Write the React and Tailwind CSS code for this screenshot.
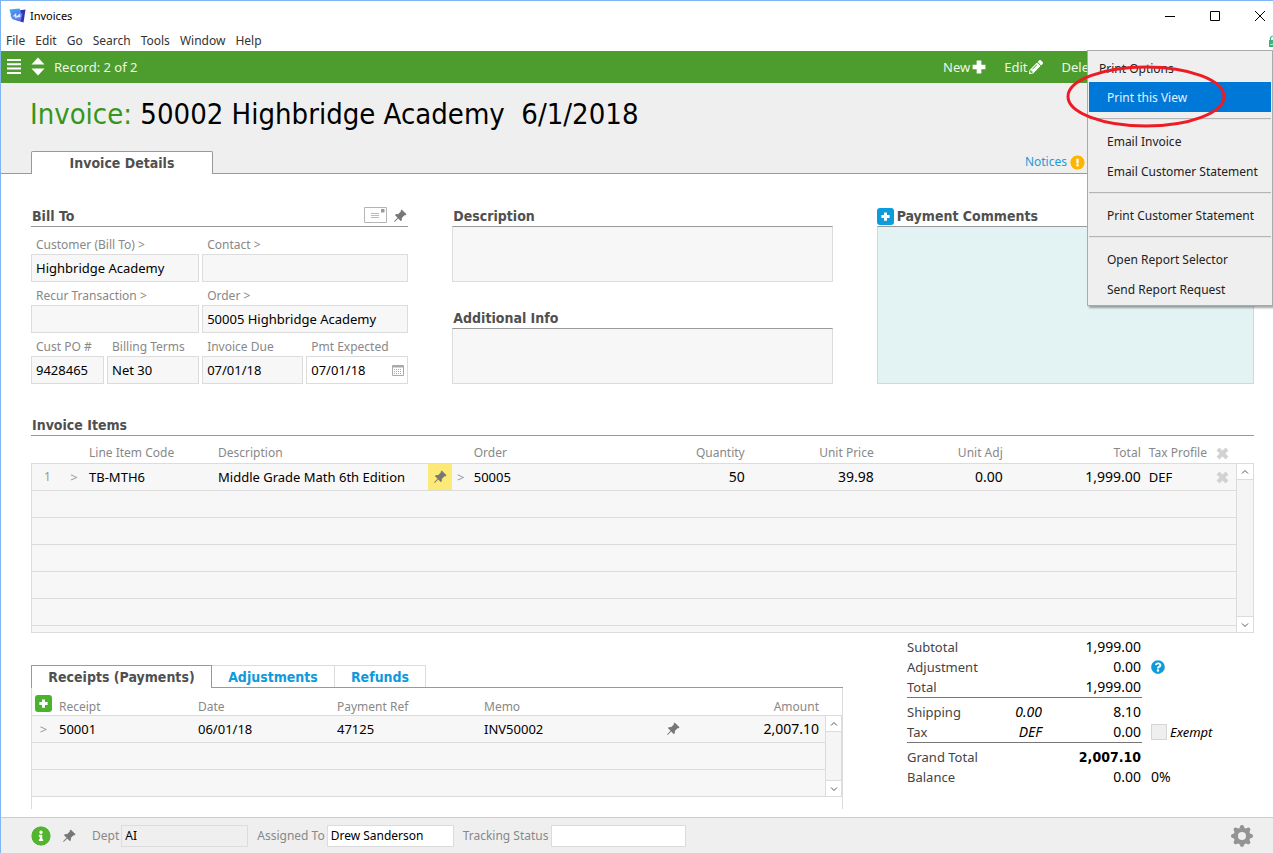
import { BsPinAngleFill, BsGearFill } from "react-icons/bs"
import { FaPencilAlt, FaInfoCircle, FaExclamationCircle, FaQuestionCircle } from "react-icons/fa"

const MENUS = ["File", "Edit", "Go", "Search", "Tools", "Window", "Help"]

const PRINT_MENU = [
  ["Print this View"],
  ["Email Invoice", "Email Customer Statement"],
  ["Print Customer Statement"],
  ["Open Report Selector", "Send Report Request"],
]

const HEADING = "font-['DejaVu_Sans_Condensed','Noto_Sans',sans-serif] text-sm leading-5 font-bold text-[#505050]"

export default function App() {
  return (
    <div className="relative flex min-h-screen flex-col overflow-hidden border-t border-l border-[#7fb5f5] bg-white font-['Noto_Sans',sans-serif] text-[13px] leading-5 text-black">
      <TitleBar />
      <MenuBar />
      <Toolbar />
      <Header />
      <main className="grow pr-[19px] pl-[30px]">
        <div className="grid grid-cols-[377fr_380fr_377fr] gap-11 pt-8">
          <BillTo />
          <Notes />
          <PaymentComments />
        </div>
        <InvoiceItems />
        <div className="flex items-start gap-16">
          <Receipts />
          <Totals />
        </div>
      </main>
      <Footer />
      <PrintMenu />
    </div>
  )
}

function TitleBar() {
  return (
    <div className="flex h-[30px] items-center pl-2">
      <AppLogo />
      <h1 className="ml-1 text-[11px]">Invoices</h1>
      <div className="ml-auto flex items-center gap-[33px] pr-[7px]">
        <button aria-label="Minimize">
          <svg className="size-3" viewBox="0 0 12 12"><path d="M1 6.5H11" stroke="#000" /></svg>
        </button>
        <button aria-label="Maximize">
          <svg className="size-3" viewBox="0 0 12 12"><path d="M1.5 1.5H10.5V10.5H1.5Z" stroke="#000" fill="none" /></svg>
        </button>
        <button aria-label="Close">
          <svg className="size-3" viewBox="0 0 12 12"><path d="M1 1L11 11M11 1L1 11" stroke="#000" /></svg>
        </button>
      </div>
    </div>
  )
}

function AppLogo() {
  return (
    <svg className="h-4 w-[17px]" viewBox="0 0 17 16">
      <path d="M9 2.500L16.500 1.500L14.500 14.500L5 11.500Z" fill="#3a2fb0" />
      <path d="M0.500 1.500L10.500 0.500L12 5L9 12.500L3 11Z" fill="#38a6f2" />
      <path d="M3.500 4L9 2.500L13.500 6L11.500 13L5 11.500L1.500 8Z" fill="#5a83ee" />
      <path d="M3.500 8.500L7 5L7.500 8.500L11 5.500L11.500 9L8 9.500L6.500 10.500L6 8.500Z" fill="#dfeafc" />
    </svg>
  )
}

function MenuBar() {
  return (
    <nav className="flex h-5 items-center gap-[10px] pl-[5px] text-xs text-[#333]">
      {MENUS.map(m => <button key={m}>{m}</button>)}
      <svg className="ml-auto h-3 w-1" viewBox="0 0 4 12">
        <path d="M0 5H4V12H0Z" fill="#35b57c" />
        <path d="M1.500 5V3Q1.500 1.500 4 1" stroke="#35b57c" strokeWidth="1.200" fill="none" />
        <path d="M1.500 9L2.500 10L4 8.500" stroke="#fff" fill="none" />
      </svg>
    </nav>
  )
}

function Toolbar() {
  return (
    <div className="flex h-8 items-center bg-[#4c9d2d] pb-px pl-[6px] text-[#eef6ea]">
      <button aria-label="List">
        <svg className="h-[15px] w-[14px]" viewBox="0 0 14 15">
          <path d="M0 1H14M0 5.300H14M0 9.600H14M0 14H14" stroke="#fff" strokeWidth="2" />
        </svg>
      </button>
      <button aria-label="Record" className="ml-[10px]">
        <svg className="h-[19px] w-[14px]" viewBox="0 0 14 19">
          <path d="M7 0.500L13.500 7.500H0.500ZM7 18.500L13.500 11.500H0.500Z" fill="#fff" />
        </svg>
      </button>
      <span className="ml-[9px]">Record: 2 of 2</span>
      <div className="ml-auto flex items-center gap-[18px] pr-[172px]">
        <button className="flex items-center gap-[2px]">New <Plus className="size-[14px]" /></button>
        <button className="flex items-center gap-[2px]">Edit <FaPencilAlt className="size-[14px] text-white" /></button>
        <button>Delete</button>
      </div>
    </div>
  )
}

function Header() {
  return (
    <header className="flex flex-col bg-[#efefef]">
      <h2 className="pt-[11px] pl-[29px] font-['DejaVu_Sans_Condensed','Noto_Sans',sans-serif] text-[29px] leading-10 whitespace-pre">
        <span className="text-[#36961a]">Invoice:</span> 50002 Highbridge Academy  6/1/2018
      </h2>
      <div className="flex items-end pt-[17px]">
        <div className="w-[30px] border-b border-[#999]" />
        <button className={`${HEADING} h-[23px] w-[182px] rounded-t-xs border border-b-0 border-[#999] bg-white`}>
          Invoice Details
        </button>
        <div className="flex h-[23px] grow justify-end border-b border-[#999] pr-[188px]">
          <a href="#notices" className="flex items-center gap-[3px] text-xs text-[#1c9bd8]">
            Notices <FaExclamationCircle className="size-[15px] rounded-full bg-white text-[#fdb504]" />
          </a>
        </div>
      </div>
    </header>
  )
}

function Field({ id, label, value, className = "" }) {
  return (
    <div className={className}>
      <label htmlFor={id} className="block h-5 pl-[5px] text-xs leading-[22px] text-[#888]">{label}</label>
      <input id={id} defaultValue={value} readOnly className="h-7 w-full border border-[#dcdcdc] bg-[#f7f7f7] px-1 outline-none" />
    </div>
  )
}

function BillTo() {
  return (
    <section>
      <div className="flex h-[21px] items-start border-b border-[#999] pr-px pl-px">
        <h3 className={HEADING}>Bill To</h3>
        <button aria-label="Address" className="ml-auto">
          <svg className="h-[17px] w-[23px]" viewBox="0 0 23 17">
            <path d="M0.500 1.500H22.500V16.500H0.500Z" fill="#fff" stroke="#b5b5b5" />
            <path d="M7 7.500H15M7 9.500H15M7 11.500H15" stroke="#bbb" />
            <path d="M17 3H20.500V6.500H17Z" fill="#999" />
          </svg>
        </button>
        <button aria-label="Pin" className="mt-[3px] ml-[6px]"><Pin /></button>
      </div>
      <div className="mt-[7px] grid grid-cols-[73fr_92fr_101fr_102fr] gap-[3px]">
        <Field id="customer" label="Customer (Bill To) >" value="Highbridge Academy" className="col-span-2" />
        <Field id="contact" label="Contact >" value="" className="col-span-2" />
        <Field id="recur" label="Recur Transaction >" value="" className="col-span-2" />
        <Field id="order" label="Order >" value="50005 Highbridge Academy" className="col-span-2" />
        <Field id="po" label="Cust PO #" value="9428465" />
        <Field id="terms" label="Billing Terms" value="Net 30" />
        <Field id="due" label="Invoice Due" value="07/01/18" />
        <div>
          <label htmlFor="expected" className="block h-5 pl-[5px] text-xs leading-[22px] text-[#888]">Pmt Expected</label>
          <div className="flex h-7 items-center border border-[#dcdcdc] pr-[3px] pl-1">
            <input id="expected" defaultValue="07/01/18" className="w-full min-w-0 outline-none" />
            <button aria-label="Pick date">
              <svg className="h-[11px] w-3" viewBox="0 0 12 11">
                <path d="M0.500 0.500H11.500V10.500H0.500Z" fill="#fff" stroke="#aaa" />
                <path d="M1 1.500H11" stroke="#aaa" strokeWidth="2" />
                <path d="M2 4.500H10M2 6.500H10M2 8.500H10" stroke="#aaa" strokeDasharray="1 1" />
              </svg>
            </button>
          </div>
        </div>
      </div>
    </section>
  )
}

function Notes() {
  return (
    <section className="flex flex-col">
      <label htmlFor="description" className={`${HEADING} pl-px`}>Description</label>
      <textarea id="description" className="h-14 w-full resize-none border border-[#dcdcdc] border-t-[#999] bg-[#f7f7f7]" />
      <label htmlFor="info" className={`${HEADING} mt-[26px] pl-px`}>Additional Info</label>
      <textarea id="info" className="h-14 w-full resize-none border border-[#dcdcdc] border-t-[#999] bg-[#f7f7f7]" />
    </section>
  )
}

function PaymentComments() {
  return (
    <section className="flex flex-col">
      <div className="flex items-center gap-[3px]">
        <button aria-label="Add comment" className="flex size-[17px] items-center justify-center rounded-[3px] bg-[#0c9cdc]">
          <Plus className="size-[9px]" />
        </button>
        <label htmlFor="comments" className={HEADING}>Payment Comments</label>
      </div>
      <textarea id="comments" className="grow resize-none border border-[#bfe0dd] border-t-[#999] bg-[#e3f3f3]" />
    </section>
  )
}

function InvoiceItems() {
  const th = "h-[28px] border-b border-[#dcdcdc] px-1 pt-[7px] font-normal whitespace-nowrap"
  const td = "h-[27px] border-b border-[#dcdcdc] px-1"
  return (
    <section className="pt-[31px]">
      <h3 className={`${HEADING} border-b border-[#999] pl-px`}>Invoice Items</h3>
      <div className="flex">
        <table className="grow table-fixed border-separate border-spacing-0">
          <colgroup>
            <col className="w-8" />
            <col className="w-[22px]" />
            <col className="w-[129px]" />
            <col />
            <col className="w-6" />
            <col className="w-[18px]" />
            <col className="w-[150px]" />
            <col className="w-[129px]" />
            <col className="w-[129px]" />
            <col className="w-[129px]" />
            <col className="w-[138px]" />
            <col className="w-[66px]" />
            <col className="w-[25px]" />
          </colgroup>
          <thead className="text-left text-xs leading-5 text-[#888]">
            <tr>
              <th className={th} />
              <th className={th} />
              <th className={th}>Line Item Code</th>
              <th className={th}>Description</th>
              <th className={th} />
              <th className={th} />
              <th className={th}>Order</th>
              <th className={`${th} text-right`}>Quantity</th>
              <th className={`${th} text-right`}>Unit Price</th>
              <th className={`${th} text-right`}>Unit Adj</th>
              <th className={`${th} text-right`}>Total</th>
              <th className={th}>Tax Profile</th>
              <th className={th}><Cross /></th>
            </tr>
          </thead>
          <tbody className="bg-[#f7f7f7]">
            <tr>
              <td className={`${td} border-l text-center text-xs text-[#999]`}>1</td>
              <td className={`${td} text-center text-[#999]`}>&gt;</td>
              <td className={td}>TB-MTH6</td>
              <td className={td}>Middle Grade Math 6th Edition</td>
              <td className="border-b border-[#dcdcdc] bg-[#fde976] pl-[5px]"><Pin /></td>
              <td className={`${td} text-center text-[#999]`}>&gt;</td>
              <td className={td}>50005</td>
              <td className={`${td} text-right text-sm`}>50</td>
              <td className={`${td} text-right text-sm`}>39.98</td>
              <td className={`${td} text-right text-sm`}>0.00</td>
              <td className={`${td} text-right text-sm`}>1,999.00</td>
              <td className={td}>DEF</td>
              <td className={td}><Cross /></td>
            </tr>
            {[1, 2, 3, 4, 5].map(n => (
              <tr key={n}><td colSpan="13" className={`${td} border-l`} /></tr>
            ))}
            <tr><td colSpan="13" className="h-[7px] border-b border-l border-[#dcdcdc]" /></tr>
          </tbody>
        </table>
        <div className="flex w-[18px] flex-col pt-[27px]">
          <ScrollBar />
        </div>
      </div>
    </section>
  )
}

function Receipts() {
  const th = "h-[28px] border-b border-[#dcdcdc] px-1 pt-[10px] font-normal whitespace-nowrap"
  const td = "h-[27px] border-b border-[#dcdcdc] px-1"
  const tab = "h-[22px] border-t border-r border-[#dcdcdc] font-['DejaVu_Sans_Condensed','Noto_Sans',sans-serif] text-sm leading-5 font-bold text-[#0f9adb]"
  return (
    <section className="grow pt-8">
      <div className="flex">
        <button className={`${HEADING} h-[23px] w-[181px] border border-b-0 border-[#999]`}>Receipts (Payments)</button>
        <div className="flex grow border-b border-[#999]">
          <button className={`${tab} w-[123px]`}>Adjustments</button>
          <button className={`${tab} w-[91px]`}>Refunds</button>
        </div>
      </div>
      <div className="flex border-x border-[#dcdcdc] pb-3">
        <table className="grow table-fixed border-separate border-spacing-0">
          <colgroup>
            <col className="w-[23px]" />
            <col className="w-[139px]" />
            <col className="w-[139px]" />
            <col className="w-[147px]" />
            <col />
            <col className="w-[38px]" />
            <col className="w-[133px]" />
          </colgroup>
          <thead className="text-left text-xs leading-4 text-[#888]">
            <tr>
              <th className="border-b border-[#dcdcdc] pt-1 pl-[3px]">
                <button aria-label="Add receipt" className="flex size-[17px] items-center justify-center rounded-[3px] bg-[#49b32b]">
                  <Plus className="size-[9px]" />
                </button>
              </th>
              <th className={th}>Receipt</th>
              <th className={th}>Date</th>
              <th className={th}>Payment Ref</th>
              <th className={th}>Memo</th>
              <th className={th} />
              <th className={`${th} pr-[6px] text-right`}>Amount</th>
            </tr>
          </thead>
          <tbody className="bg-[#f7f7f7]">
            <tr>
              <td className={`${td} text-center text-[#999]`}>&gt;</td>
              <td className={td}>50001</td>
              <td className={td}>06/01/18</td>
              <td className={td}>47125</td>
              <td className={td}>INV50002</td>
              <td className={td}><div className="flex justify-center"><Pin /></div></td>
              <td className={`${td} pr-[6px] text-right text-sm`}>2,007.10</td>
            </tr>
            <tr><td colSpan="7" className={td} /></tr>
            <tr><td colSpan="7" className={td} /></tr>
          </tbody>
        </table>
        <div className="flex w-[17px] flex-col pt-[27px]">
          <ScrollBar />
        </div>
      </div>
    </section>
  )
}

function ScrollBar() {
  return (
    <div className="flex grow flex-col justify-between border border-[#dcdcdc] bg-[#f5f5f5]">
      <button aria-label="Scroll up" className="flex h-4 items-center justify-center border-b border-[#dcdcdc] bg-white">
        <svg className="size-2" viewBox="0 0 8 8"><path d="M1 5.500L4 2.500L7 5.500" stroke="#555" fill="none" /></svg>
      </button>
      <button aria-label="Scroll down" className="flex h-4 items-center justify-center border-t border-[#dcdcdc] bg-white">
        <svg className="size-2" viewBox="0 0 8 8"><path d="M1 2.500L4 5.500L7 2.500" stroke="#555" fill="none" /></svg>
      </button>
    </div>
  )
}

function TotalRow({ label, note, value, strong, children }) {
  return (
    <div className="flex">
      <div className="w-[75px] shrink-0 whitespace-nowrap text-[#444]">{label}</div>
      <div className="w-[60px] text-right text-sm leading-5 italic">{note}</div>
      <div className={`w-[99px] text-right text-sm leading-5 ${strong ? "font-['DejaVu_Sans_Condensed','Noto_Sans',sans-serif] font-bold" : ""}`}>{value}</div>
      <div className="ml-[10px] flex items-center">{children}</div>
    </div>
  )
}

function Totals() {
  return (
    <section className="w-[347px] pt-1">
      <TotalRow label="Subtotal" value="1,999.00" />
      <TotalRow label="Adjustment" value="0.00">
        <FaQuestionCircle className="size-[14px] text-[#0f9adb]" />
      </TotalRow>
      <TotalRow label="Total" value="1,999.00" />
      <hr className="mb-1 w-[235px] border-[#777]" />
      <TotalRow label="Shipping" note="0.00" value="8.10" />
      <TotalRow label="Tax" note="DEF" value="0.00">
        <label className="flex items-center gap-[3px] italic">
          <input type="checkbox" className="size-4 appearance-none border border-[#d5d5d5] bg-[#efefef]" />
          Exempt
        </label>
      </TotalRow>
      <hr className="mb-1 w-[235px] border-[#777]" />
      <TotalRow label="Grand Total" value="2,007.10" strong />
      <TotalRow label="Balance" value="0.00"><span className="text-sm leading-5">0%</span></TotalRow>
    </section>
  )
}

function Footer() {
  return (
    <footer className="flex h-9 items-center border-t border-[#ccc] bg-[#efefef] pr-5 pl-[30px] text-xs">
      <button aria-label="Info"><FaInfoCircle className="size-5 rounded-full bg-white text-[#52b42f]" /></button>
      <button aria-label="Pin" className="ml-[11px]"><Pin /></button>
      <label htmlFor="dept" className="ml-4 text-[#888]">Dept</label>
      <input id="dept" defaultValue="AI" readOnly className="ml-[2px] h-[22px] w-[127px] border border-[#dcdcdc] px-[3px] outline-none" />
      <label htmlFor="assigned" className="ml-[9px] text-[#888]">Assigned To</label>
      <input id="assigned" defaultValue="Drew Sanderson" className="ml-[2px] h-[22px] w-[127px] border border-[#dcdcdc] bg-white px-[3px] outline-none" />
      <label htmlFor="tracking" className="ml-[9px] text-[#888]">Tracking Status</label>
      <input id="tracking" className="ml-[2px] h-[22px] w-[135px] border border-[#dcdcdc] bg-white px-[3px] outline-none" />
      <button aria-label="Settings" className="ml-auto"><BsGearFill className="size-[22px] text-[#949494]" /></button>
    </footer>
  )
}

function PrintMenu() {
  return (
    <div className="absolute top-[49px] right-0 w-[186px] border border-[#aaa] bg-[#efefef] p-px text-xs text-[#222] shadow-[2px_2px_2px_rgba(0,0,0,0.35)]">
      <div className="flex h-[30px] items-center pt-[3px] pl-[10px]">Print Options</div>
      {PRINT_MENU.map((group, i) => (
        <div key={i}>
          {i > 0 && <hr className="my-[6px] border-y border-t-[#b4b4b4] border-b-[#e6e6e6]" />}
          {group.map(item => (
            <button
              key={item}
              className={`flex h-[30px] w-full items-center pt-px pl-[18px] ${item === "Print this View" ? "bg-[#0078d7] text-[#e5f1fb]" : ""}`}
            >
              {item}
            </button>
          ))}
        </div>
      ))}
      <svg className="absolute top-[14px] -left-[22px] h-[63px] w-[160px]" viewBox="0 0 160 63">
        <ellipse cx="80" cy="31.500" rx="78" ry="29.500" fill="none" stroke="#ed1c24" strokeWidth="3" />
      </svg>
    </div>
  )
}

function Pin() {
  return <BsPinAngleFill className="size-[14px] text-[#777]" />
}

function Plus({ className }) {
  return (
    <svg className={className} viewBox="0 0 12 12">
      <path d="M4 0.500H8V4H11.500V8H8V11.500H4V8H0.500V4H4Z" fill="#fff" />
    </svg>
  )
}

function Cross() {
  return (
    <svg className="ml-px size-[13px]" viewBox="0 0 13 13">
      <path d="M2 2L11 11M11 2L2 11" stroke="#d2d2d2" strokeWidth="4" />
    </svg>
  )
}
